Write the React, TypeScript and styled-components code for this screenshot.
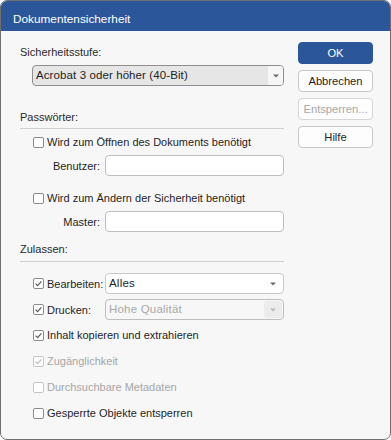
import React from "react";
import styled, { createGlobalStyle } from "styled-components";

const GlobalStyle = createGlobalStyle`
	html, body {
		margin: 0;
		padding: 0;
		background: #fff;
	}
	body {
		font-family: "Liberation Sans", Arial, sans-serif;
		font-size: 11px;
		color: #1f1f1f;
	}
`;

const Arrow = ({ faded }: { faded?: boolean }) => (
	<svg width="6" height="4" viewBox="0 0 6 4">
		<path d="M0 0.5 H6 L3 3.5 Z" fill={faded ? "#b8b8b8" : "#6a6a6a"} />
	</svg>
);

const Check = ({ faded }: { faded?: boolean }) => (
	<svg width="9" height="9" viewBox="0 0 9 9">
		<path
			d="M1.6 4.6 L3.6 6.6 L7.4 2.4"
			fill="none"
			stroke={faded ? "#bdbdbd" : "#5a5a5a"}
			strokeWidth="1.2"
		/>
	</svg>
);

const CheckBox = ({ checked, disabled }: { checked?: boolean; disabled?: boolean }) => (
	<Box disabled={disabled}>{checked && <Check faded={disabled} />}</Box>
);

const App = () => {
	return (
		<>
			<GlobalStyle />
			<Window>
				<TitleBar>Dokumentensicherheit</TitleBar>
				<Body>
					<Main>
						<Heading>Sicherheitsstufe:</Heading>
						<LevelSelect>
							<LevelValue>Acrobat 3 oder höher (40-Bit)</LevelValue>
							<LevelArrow>
								<Arrow />
							</LevelArrow>
						</LevelSelect>

						<Heading gap={23}>Passwörter:</Heading>
						<Divider gap={3} />
						<CheckRow gap={4}>
							<CheckBox />
							<span>Wird zum Öffnen des Dokuments benötigt</span>
						</CheckRow>
						<FieldRow gap={4}>
							<FieldLabel>Benutzer:</FieldLabel>
							<TextInput />
						</FieldRow>
						<CheckRow gap={13}>
							<CheckBox />
							<span>Wird zum Ändern der Sicherheit benötigt</span>
						</CheckRow>
						<FieldRow gap={4}>
							<FieldLabel>Master:</FieldLabel>
							<TextInput />
						</FieldRow>

						<Heading gap={9}>Zulassen:</Heading>
						<Divider gap={4} />
						<PermRow gap={11}>
							<PermLabel>
								<CheckBox checked />
								<span>Bearbeiten:</span>
							</PermLabel>
							<PermSelect>
								<PermValue>Alles</PermValue>
								<PermArrow>
									<Arrow />
								</PermArrow>
							</PermSelect>
						</PermRow>
						<PermRow gap={5}>
							<PermLabel>
								<CheckBox checked />
								<span>Drucken:</span>
							</PermLabel>
							<PermSelect disabled>
								<PermValue disabled>Hohe Qualität</PermValue>
								<PermArrow disabled>
									<Arrow faded />
								</PermArrow>
							</PermSelect>
						</PermRow>
						<CheckRow gap={6}>
							<CheckBox checked />
							<span>Inhalt kopieren und extrahieren</span>
						</CheckRow>
						<CheckRow gap={8} disabled>
							<CheckBox checked disabled />
							<span>Zugänglichkeit</span>
						</CheckRow>
						<CheckRow gap={8} disabled>
							<CheckBox disabled />
							<span>Durchsuchbare Metadaten</span>
						</CheckRow>
						<CheckRow gap={8}>
							<CheckBox />
							<span>Gesperrte Objekte entsperren</span>
						</CheckRow>
					</Main>
					<Actions>
						<Button primary>OK</Button>
						<Button>Abbrechen</Button>
						<Button disabled>Entsperren...</Button>
						<Button>Hilfe</Button>
					</Actions>
				</Body>
			</Window>
		</>
	);
};

export default App;

const Window = styled.div`
	box-sizing: border-box;
	width: 391px;
	height: 440px;
	border: 1px solid #6f6f6f;
	border-radius: 7px;
	overflow: hidden;
	background: #f7f7f7;
	display: flex;
	flex-direction: column;
`;

const TitleBar = styled.div`
	box-sizing: border-box;
	height: 30px;
	padding: 5px 0 0 12px;
	display: flex;
	align-items: center;
	background: #2b579a;
	color: #fff;
	font-size: 11.8px;
`;

const Body = styled.div`
	display: grid;
	grid-template-columns: 264px 75px;
	column-gap: 14px;
	padding-left: 19px;
`;

const Main = styled.div`
	display: flex;
	flex-direction: column;
	padding-top: 13px;
`;

const Heading = styled.div<{ gap?: number }>`
	height: 16px;
	line-height: 16px;
	margin-top: ${({ gap }) => gap || 0}px;
	color: #2a2a2a;
`;

const Divider = styled.div<{ gap: number }>`
	height: 1px;
	margin-top: ${({ gap }) => gap}px;
	background: #cfcfcf;
`;

const LevelSelect = styled.div`
	box-sizing: border-box;
	display: flex;
	height: 21px;
	margin: 5px 0 0 12px;
	border: 1px solid #8e8e8e;
	border-radius: 4px;
	overflow: hidden;
	background: #e6e6e6;
`;

const LevelValue = styled.div`
	flex: 1;
	padding-left: 3px;
	line-height: 19px;
	font-size: 11.5px;
	letter-spacing: 0.1px;
	color: #222;
`;

const LevelArrow = styled.div`
	width: 15px;
	display: flex;
	align-items: center;
	justify-content: center;
	background: #f6f6f6;
`;

const CheckRow = styled.div<{ gap: number; disabled?: boolean }>`
	display: flex;
	align-items: center;
	gap: 3px;
	height: 18px;
	margin: ${({ gap }) => gap}px 0 0 13px;
	color: ${({ disabled }) => (disabled ? "#a6a6a6" : "#1f1f1f")};
`;

const Box = styled.span<{ disabled?: boolean }>`
	box-sizing: border-box;
	width: 11px;
	height: 11px;
	display: flex;
	align-items: center;
	justify-content: center;
	border: 1px solid ${({ disabled }) => (disabled ? "#c6c6c6" : "#8a8a8a")};
	border-radius: 2px;
	background: #fff;
`;

const FieldRow = styled.div<{ gap: number }>`
	display: flex;
	align-items: center;
	margin: ${({ gap }) => gap}px 0 0 13px;
`;

const FieldLabel = styled.div`
	width: 67px;
	padding-right: 5px;
	text-align: right;
`;

const TextInput = styled.div`
	box-sizing: border-box;
	flex: 1;
	height: 21px;
	border: 1px solid #bdbdbd;
	border-radius: 4px;
	background: #fff;
`;

const PermRow = styled.div<{ gap: number }>`
	display: flex;
	align-items: center;
	margin: ${({ gap }) => gap}px 0 0 13px;
`;

const PermLabel = styled.div`
	width: 72px;
	display: flex;
	align-items: center;
	gap: 3px;
`;

const PermSelect = styled.div<{ disabled?: boolean }>`
	box-sizing: border-box;
	flex: 1;
	display: flex;
	height: 21px;
	border: 1px solid ${({ disabled }) => (disabled ? "#bebebe" : "#c9c9c9")};
	border-radius: 4px;
	overflow: hidden;
	background: ${({ disabled }) => (disabled ? "#f7f7f7" : "#fff")};
`;

const PermValue = styled.div<{ disabled?: boolean }>`
	flex: 1;
	padding-left: 3px;
	line-height: 19px;
	font-size: 11.5px;
	letter-spacing: 0.2px;
	color: ${({ disabled }) => (disabled ? "#a8a8a8" : "#222")};
`;

const PermArrow = styled.div<{ disabled?: boolean }>`
	width: 18px;
	margin: 1px;
	display: flex;
	align-items: center;
	justify-content: center;
	border-radius: 3px;
	background: ${({ disabled }) => (disabled ? "#ececec" : "transparent")};
`;

const Actions = styled.div`
	display: flex;
	flex-direction: column;
	gap: 6px;
	padding-top: 11px;
`;

const Button = styled.button<{ primary?: boolean }>`
	box-sizing: border-box;
	height: 22px;
	padding: 0;
	border: 1px solid ${({ primary }) => (primary ? "#2b579a" : "#c8c8c8")};
	border-radius: 4px;
	background: ${({ primary }) => (primary ? "#2b579a" : "#fdfdfd")};
	color: ${({ primary }) => (primary ? "#fff" : "#1f1f1f")};
	font-family: "Liberation Sans", Arial, sans-serif;
	font-size: 11.2px;

	&:disabled {
		color: #a8a8a8;
		border-color: #d6d6d6;
	}
`;
